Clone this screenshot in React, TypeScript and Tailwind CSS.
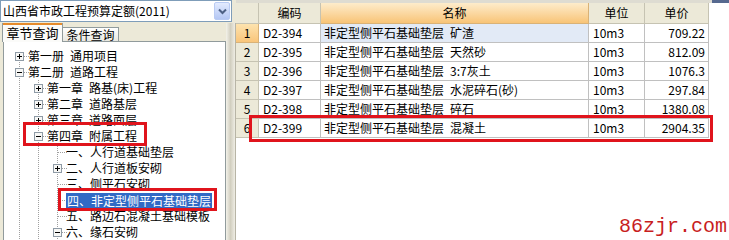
import React from 'react';

type TreeItem = {
  level: number;
  head: string;
  tail?: string;
  kind: 'plus' | 'minus' | 'leaf';
  guides: boolean[];
  first?: boolean;
  selected?: boolean;
};

const tree: TreeItem[] = [
  { level: 0, head: '第一册', tail: '通用项目', kind: 'plus', guides: [], first: true },
  { level: 0, head: '第二册', tail: '道路工程', kind: 'minus', guides: [] },
  { level: 1, head: '第一章', tail: '路基(床)工程', kind: 'plus', guides: [true] },
  { level: 1, head: '第二章', tail: '道路基层', kind: 'plus', guides: [true] },
  { level: 1, head: '第三章', tail: '道路面层', kind: 'plus', guides: [true] },
  { level: 1, head: '第四章', tail: '附属工程', kind: 'minus', guides: [true] },
  { level: 2, head: '一、人行道基础垫层', kind: 'leaf', guides: [true, true] },
  { level: 2, head: '二、人行道板安砌', kind: 'plus', guides: [true, true] },
  { level: 2, head: '三、侧平石安砌', kind: 'leaf', guides: [true, true] },
  { level: 2, head: '四、非定型侧平石基础垫层', kind: 'leaf', guides: [true, true], selected: true },
  { level: 2, head: '五、路边石混凝土基础模板', kind: 'leaf', guides: [true, true] },
  { level: 2, head: '六、缘石安砌', kind: 'minus', guides: [true, true] },
];

const rows = [
  { code: 'D2-394', name: '矿渣', unit: '10m3', price: '709.22' },
  { code: 'D2-395', name: '天然砂', unit: '10m3', price: '812.09' },
  { code: 'D2-396', name: '3:7灰土', unit: '10m3', price: '1076.3' },
  { code: 'D2-397', name: '水泥碎石(砂)', unit: '10m3', price: '297.84' },
  { code: 'D2-398', name: '碎石', unit: '10m3', price: '1380.08' },
  { code: 'D2-399', name: '混凝土', unit: '10m3', price: '2904.35' },
];

const dot = '#a0a0a0';

function Guide({ line }: { line: boolean }) {
  return (
    <svg width="19" height="16" className="shrink-0">
      {line && <line x1="9.5" y1="0" x2="9.5" y2="16" stroke={dot} strokeDasharray="1 1" />}
    </svg>
  );
}

function Joint({ kind, first }: { kind: TreeItem['kind']; first?: boolean }) {
  return (
    <svg width="19" height="16" className="shrink-0">
      <line x1="9.5" y1={first ? 8 : 0} x2="9.5" y2="16" stroke={dot} strokeDasharray="1 1" />
      <line x1="10" y1="8.5" x2="19" y2="8.5" stroke={dot} strokeDasharray="1 1" />
      {kind !== 'leaf' && (
        <g>
          <rect x="5.5" y="4.5" width="8" height="8" fill="#f7f7f5" stroke="#8f9ba6" />
          <line x1="7" y1="8.5" x2="12" y2="8.5" stroke="#000" />
          {kind === 'plus' && <line x1="9.5" y1="6" x2="9.5" y2="11" stroke="#000" />}
        </g>
      )}
    </svg>
  );
}

function TreeRow({ item }: { item: TreeItem }) {
  return (
    <div className="flex h-[16px] items-center whitespace-nowrap">
      {item.guides.map((g, i) => (
        <Guide key={i} line={g} />
      ))}
      <Joint kind={item.kind} first={item.first} />
      {item.selected ? (
        <span className="-ml-px h-[15px] bg-[#316ac5] px-px leading-[15px] text-white">{item.head}</span>
      ) : (
        <span className="-ml-px leading-[16px]">
          {item.head}
          {item.tail && <span className="ml-[6px]">{item.tail}</span>}
        </span>
      )}
    </div>
  );
}

function Combo() {
  return (
    <div className="flex h-[22px] w-[232px] items-center border border-[#7f9db9] bg-white">
      <span className="pl-[2px] text-[12px] leading-[20px]">山西省市政工程预算定额(2011)</span>
      <div className="ml-auto mr-px flex h-[18px] w-[16px] items-center justify-center rounded-[2px] border border-[#b9cbf3] bg-gradient-to-b from-[#e3ebfe] to-[#b4c7f4]">
        <svg width="9" height="7" viewBox="0 0 9 7">
          <path d="M1 1.5 L4.5 5 L8 1.5" fill="none" stroke="#4d6185" strokeWidth="2" />
        </svg>
      </div>
    </div>
  );
}

const headCell = 'flex h-[21px] items-center justify-center border-r border-b border-[#c6c3b2] bg-[#ece9d8]';
const numCell = 'flex h-[19px] items-center justify-center border-r border-b border-[#c6c3b2] bg-[#ece9d8]';
const bodyCell = 'flex h-[19px] items-center border-r border-b border-[#c0c0c0] whitespace-nowrap';

export default function App() {
  return (
    <div className="relative flex h-[240px] w-[729px] overflow-hidden bg-white font-['Noto_Sans_CJK_SC',sans-serif] text-[12px] text-black">
      {/* left: chapter tree */}
      <div className="flex w-[236px] shrink-0 flex-col bg-[#ece9d8]">
        <Combo />
        <div className="flex min-h-0 flex-1 pt-px">
          <div className="flex w-[226px] flex-col pl-[3px]">
            <div className="flex h-[18px] items-end">
              <div className="relative z-10 -mb-px -ml-px flex h-[19px] w-[61px] items-center justify-center border-x border-[#919b9c] bg-[#fbfbf9] text-[13px] shadow-[inset_0_2px_0_#e68b2c]">
                章节查询
              </div>
              <div className="flex h-[14px] w-[56px] items-center justify-center border border-b-0 border-l-0 border-[#919b9c] bg-gradient-to-b from-white to-[#e9e8e1]">
                条件查询
              </div>
            </div>
            <div className="flex-1 border border-[#919b9c] bg-white pl-[6px] pt-[6px]">
              {tree.map((item, i) => (
                <TreeRow key={i} item={item} />
              ))}
            </div>
          </div>
          <div className="w-[10px] border-r border-[#b8b5a6] bg-gradient-to-r from-[#f3f2ea] via-[#d2cfc0] to-[#efede4]" />
        </div>
      </div>

      {/* right: quota grid */}
      <div className="flex flex-1 flex-col">
        <div className="flex h-[3px]">
          <div className="w-[476px] bg-[#dedcd2]" />
          <div className="flex-1 bg-[#56698f]" />
        </div>
        <div className="grid w-[473px] grid-cols-[23px_62px_268px_56px_64px]">
          <div className={headCell} />
          <div className={headCell}>编码</div>
          <div className="flex h-[21px] items-center justify-center border-r border-b border-[#d9b277] bg-gradient-to-b from-[#fdeccb] to-[#f8c476]">
            名称
          </div>
          <div className={headCell}>单位</div>
          <div className={headCell}>单价</div>

          {rows.map((r, i) => (
            <React.Fragment key={r.code}>
              <div
                className={
                  i === 0
                    ? 'flex h-[19px] items-center justify-center border-r border-b border-[#d9b277] bg-gradient-to-b from-[#fde3ae] to-[#f9c57a]'
                    : numCell
                }
              >
                {i + 1}
              </div>
              <div className={`${bodyCell} pl-[4px]`}>{r.code}</div>
              <div className={`${bodyCell} pl-[3px] ${i === 0 ? 'bg-[#e2eaf6]' : ''}`}>
                非定型侧平石基础垫层<span className="ml-[6px]">{r.name}</span>
              </div>
              <div className={`${bodyCell} pl-[4px]`}>{r.unit}</div>
              <div className={`${bodyCell} justify-end pr-[3px]`}>{r.price}</div>
            </React.Fragment>
          ))}
        </div>
      </div>

      {/* red annotation boxes */}
      <div className="absolute left-[23px] top-[122px] h-[24px] w-[124px] border-[3px] border-[#e0141c]" />
      <div className="absolute left-[58px] top-[188px] h-[23px] w-[159px] border-[3px] border-[#e0141c]" />
      <div className="absolute left-[249px] top-[115px] h-[27px] w-[464px] border-[3px] border-[#e0141c]" />

      {/* watermark */}
      <div className="absolute left-[619px] top-[217px] font-['Liberation_Mono',monospace] text-[20px] leading-[20px] text-[#c81e1e]">
        86zjr.com
      </div>
    </div>
  );
}
